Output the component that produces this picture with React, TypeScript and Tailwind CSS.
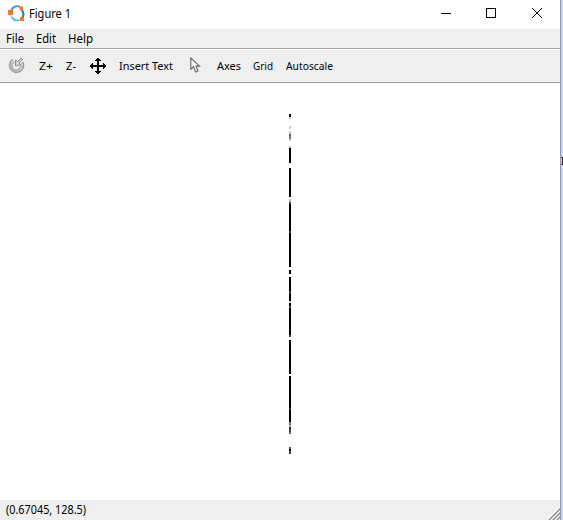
import React from "react";

type Segment = [top: number, bottom: number, color: string];

// Vertical runs of the plotted column, relative to the figure page.
const segments: Segment[] = [
  [114, 117, "#000"], [117, 119, "#ccc"], [126, 129, "#ccc"], [131, 134, "#ccc"],
  [134, 136, "#555"], [136, 139, "#777"], [139, 141, "#ccc"], [146, 148, "#ccc"],
  [148, 163, "#000"], [168, 197, "#000"], [199, 202, "#bbb"], [202, 204, "#444"],
  [204, 231, "#000"], [231, 233, "#444"], [233, 267, "#000"], [270, 274, "#000"],
  [277, 291, "#000"], [291, 294, "#333"], [294, 301, "#000"], [301, 303, "#ccc"],
  [303, 306, "#000"], [306, 308, "#555"], [308, 335, "#000"], [335, 337, "#555"],
  [340, 374, "#000"], [376, 408, "#000"], [408, 410, "#333"], [410, 422, "#000"],
  [422, 425, "#777"], [425, 427, "#aaa"], [427, 430, "#333"], [430, 432, "#444"],
  [432, 434, "#666"], [434, 437, "#eee"], [447, 449, "#555"], [449, 451, "#000"],
  [451, 454, "#444"],
];

// A label whose glyphs fill exactly the given width.
function Label({ text, width, size = 12 }: { text: string; width: number; size?: number }) {
  return (
    <svg width={width} height="18" className="block shrink-0 overflow-visible">
      <text x="0" y="13" fontSize={size} textLength={width} lengthAdjust="spacingAndGlyphs">
        {text}
      </text>
    </svg>
  );
}

function OctaveLogo() {
  return (
    <svg width="18" height="18" viewBox="0 0 18 18" className="block shrink-0" fill="none">
      <path d="M7 1.6C3.2 3 1.6 6.6 2.6 10.2c1 3.4 4 5.8 7.6 5.2" stroke="#b4e2f3" strokeWidth="2.4" />
      <path d="M3.4 5.6C4.6 1.8 8.6 0 12 2" stroke="#3a9cc2" strokeWidth="1.9" />
      <path d="M13.6 4.6c2 2.6 2.2 5.6.8 8" stroke="#1684ae" strokeWidth="2.1" />
      <path d="M4 12.2c1.6 2.6 4.6 3.8 7.6 2.6" stroke="#4db0d4" strokeWidth="1.4" />
      <path d="M0 5h5v5H0zM11.5 1.5h3.5V5h-3.5zM12 12h4v4h-4z" fill="#f6762c" />
    </svg>
  );
}

function RotateIcon() {
  return (
    <svg width="18" height="18" viewBox="0 0 18 18" className="block shrink-0" fill="none">
      <path d="M5 3A6.4 6.4 0 1 0 14 5" stroke="#c9c9c9" strokeWidth="3" />
      <path d="M5 2.4A7 7 0 1 0 14.8 5" stroke="#8d8d8d" />
      <path d="M6.4 5.2A4.2 4.2 0 1 0 12 7.2" stroke="#8d8d8d" />
      <path d="M7.5 3v6l5.2-1.6L11 6l3.6-3.6-1.8-1.2L9.6 5z" fill="#dadada" stroke="#8d8d8d" />
    </svg>
  );
}

function PanIcon() {
  return (
    <svg width="16" height="16" viewBox="0 0 16 16" className="block shrink-0">
      <path d="M7 3H5V2h1V1h1V0h2v1h1v1h1v1H9v4h4V5h1v1h1v1h1v2h-1v1h-1v1h-1V9H9v4h2v1h-1v1H9v1H7v-1H6v-1H5v-1h2V9H3v2H2v-1H1V9H0V7h1V6h1V5h1v2h4z" />
    </svg>
  );
}

function CursorIcon() {
  return (
    <svg width="11" height="17" viewBox="0 0 11 17" className="block shrink-0">
      <path d="M.8 1v11.2l2.7-2.4L5.7 15l2.3-1-2.1-4.9h3.6z" fill="#fff" stroke="#666" strokeWidth="1.15" />
    </svg>
  );
}

export default function App() {
  return (
    <div className="flex h-[520px] w-[563px] overflow-hidden bg-[#d8d8d8] text-black [font-family:'Noto_Sans','Open_Sans',sans-serif]">
      <main className="flex w-[560px] flex-col bg-white">
        <header className="flex h-[29px] items-start pl-2">
          <div className="pt-[5px]"><OctaveLogo /></div>
          <div className="ml-[3px] pt-[5px]"><Label text="Figure 1" width={42} /></div>
          <svg width="104" height="29" viewBox="0 0 104 29" className="ml-auto mr-[15px] block" fill="none" stroke="#000" shapeRendering="crispEdges">
            <path d="M0 13.5h10M45.5 8.5h9v9h-9z" />
            <path d="M91 8l10 10M101 8L91 18" shapeRendering="auto" />
          </svg>
        </header>
        <nav className="flex h-5 shrink-0 border-b border-[#a0a0a0] bg-[#efefef] pl-1.5 pt-px">
          <Label text="File" width={18} />
          <div className="ml-3"><Label text="Edit" width={20} /></div>
          <div className="ml-3"><Label text="Help" width={25} /></div>
        </nav>
        <section className="flex h-[34px] shrink-0 items-start border-b border-t border-b-[#a0a0a0] border-t-white bg-[#efefef] pl-2">
          <div className="pt-[7px]"><RotateIcon /></div>
          <div className="ml-[13px] pt-[7px]"><Label text="Z+" width={14} size={11.5} /></div>
          <div className="ml-[13px] pt-[7px]"><Label text="Z-" width={10} size={11.5} /></div>
          <div className="ml-[14px] pt-[8px]"><PanIcon /></div>
          <div className="ml-[13px] pt-[7px]"><Label text="Insert Text" width={54} size={11.5} /></div>
          <div className="ml-[17px] pt-[7px]"><CursorIcon /></div>
          <div className="ml-[16px] pt-[7px]"><Label text="Axes" width={24} size={11.5} /></div>
          <div className="ml-[12px] pt-[7px]"><Label text="Grid" width={20} size={11.5} /></div>
          <div className="ml-[13px] pt-[7px]"><Label text="Autoscale" width={47} size={11.5} /></div>
        </section>
        <section className="h-[417px] shrink-0 bg-white pl-[289px]">
          <svg width="2" height="417" viewBox="0 83 2 417" className="block" shapeRendering="crispEdges">
            {segments.map(([top, bottom, color]) => (
              <rect key={top} y={top} width="2" height={bottom - top} fill={color} />
            ))}
          </svg>
        </section>
        <footer className="flex h-5 shrink-0 items-end justify-between bg-[#efefef] pl-1.5">
          <div className="h-[19px]"><Label text="(0.67045, 128.5)" width={80} /></div>
          <svg width="12" height="12" viewBox="0 0 12 12" className="block" fill="none">
            <path d="M-1 12L12-1M3 12l9-9M7 12l5-5" stroke="#fff" strokeWidth="1.5" />
            <path d="M0 13L13 0M4 13l9-9M8 13l5-5" stroke="#8e8e8e" strokeWidth="1.5" />
          </svg>
        </footer>
      </main>
      <aside className="w-[3px] border-l border-[#899bc7] bg-gradient-to-r from-[#c8cdd8] to-[#dedede] pt-[157px]">
        <svg width="2" height="8" viewBox="0 0 2 8" className="block" shapeRendering="crispEdges">
          <path d="M0 0h2v1H0zM0 7h2v1H0zM1 1h1v6H1z" fill="#512018" />
        </svg>
      </aside>
    </div>
  );
}
